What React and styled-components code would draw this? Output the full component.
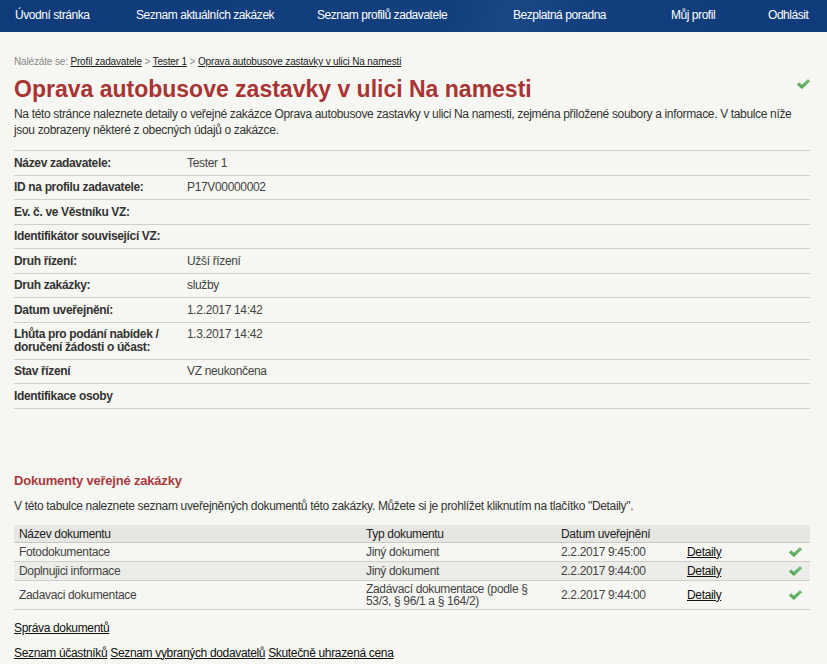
import React from "react";
import styled, { createGlobalStyle } from "styled-components";

const Global = createGlobalStyle`
  html, body { margin: 0; padding: 0; background: #f6f7f2; }
  body {
    font-family: "Liberation Sans", Arial, sans-serif;
    font-size: 12px;
    letter-spacing: -0.34px;
    color: #333;
  }
`;

const Nav = styled.nav`
  height: 32px;
  box-sizing: border-box;
  padding: 0 0 3px 15px;
  background: linear-gradient(100deg, #103b7a 0%, #123f7e 55%, #1a4786 62%, #123f7e 70%, #103b7a 100%);
  display: grid;
  grid-template-columns: 121px 181px 196px 158px 97px auto;
  align-items: center;
`;

const NavItem = styled.a`
  color: #fff;
  font-family: "Liberation Sans", Arial, sans-serif;
  font-size: 12px;
  letter-spacing: -0.45px;
  text-decoration: none;
  white-space: nowrap;
`;

const Content = styled.main`
  padding: 24px 17px 0 14px;
`;

const Crumbs = styled.div`
  font-size: 10px;
  line-height: 12px;
  letter-spacing: -0.15px;
  color: #888;
  a { color: #222; text-decoration: underline; }
`;

const TitleRow = styled.div`
  display: flex;
  justify-content: space-between;
  align-items: flex-start;
  margin-top: 8px;
`;

const Title = styled.h1`
  margin: 0;
  font-size: 23px;
  line-height: 27px;
  letter-spacing: 0;
  font-weight: bold;
  color: #a83434;
`;

const Intro = styled.p`
  margin: 3px 0 0;
  line-height: 16px;
  color: #333;
`;

const DetailTable = styled.div`
  margin-top: 12px;
  border-top: 1px solid #cfcfcb;
`;

const DetailRow = styled.div`
  display: grid;
  grid-template-columns: 173px 1fr;
  border-bottom: 1px solid #cfcfcb;
  padding: 5.5px 0;
  line-height: 12.5px;
`;

const Label = styled.div`
  font-weight: bold;
  color: #333;
`;

const Value = styled.div`
  color: #444;
`;

const Heading = styled.h2`
  margin: 64px 0 0;
  font-size: 13px;
  line-height: 15px;
  letter-spacing: -0.2px;
  font-weight: bold;
  color: #a83a3e;
`;

const Para = styled.p`
  margin: 11px 0 0;
  line-height: 15px;
  color: #333;
`;

const DocTable = styled.table`
  margin-top: 11px;
  width: 100%;
  table-layout: fixed;
  border-collapse: collapse;
  font-size: 12px;
  line-height: 12px;
`;

const Col = styled.col`
  width: ${(p) => p.$w}px;
`;

const Th = styled.th`
  text-align: left;
  font-weight: normal;
  color: #222;
  background: #e6e6e2;
  padding: 3px 0 2px ${(p) => p.$pl || 0}px;
  border-bottom: 1px solid #c8c8c4;
`;

const Tr = styled.tr`
  background: ${(p) => (p.$alt ? "#ecede8" : "transparent")};
  border-bottom: 1px solid #cfcfcb;
`;

const Td = styled.td`
  padding: 2px ${(p) => p.$pr || 0}px 2px ${(p) => p.$pl || 0}px;
  color: #444;
  vertical-align: middle;
`;

const CheckCell = styled.td`
  padding: 1px 7px 1px 0;
  vertical-align: middle;
  line-height: 0;
`;

const CheckBox = styled.div`
  height: 16px;
  display: flex;
  align-items: center;
  justify-content: flex-end;
`;

const Link = styled.a`
  color: #111;
  text-decoration: underline;
`;

const LinkLine = styled.div`
  margin-top: 11px;
  line-height: 14px;
  display: flex;
  gap: 3px;
`;

const CheckSvg = styled.svg`
  display: block;
  width: 15px;
  height: 12px;
`;

const TitleCheck = styled.div`
  padding-top: 2px;
  margin-right: -1px;
`;

function Check() {
  return (
    <CheckSvg viewBox="0 0 16 12">
      <defs>
        <linearGradient id="cg" x1="0" y1="0" x2="0" y2="1">
          <stop offset="0" stopColor="#7cc27a" />
          <stop offset="1" stopColor="#4f9f50" />
        </linearGradient>
      </defs>
      <path d="M0.8 6.6 L3.4 4.2 L6.2 6.9 L12.8 0.6 L15.2 3 L6.2 11.4 Z" fill="url(#cg)" />
    </CheckSvg>
  );
}

const details = [
  ["Název zadavatele:", "Tester 1"],
  ["ID na profilu zadavatele:", "P17V00000002"],
  ["Ev. č. ve Věstníku VZ:", ""],
  ["Identifikátor související VZ:", ""],
  ["Druh řízení:", "Užší řízení"],
  ["Druh zakázky:", "služby"],
  ["Datum uveřejnění:", "1.2.2017 14:42"],
  ["Lhůta pro podání nabídek / doručení žádosti o účast:", "1.3.2017 14:42"],
  ["Stav řízení", "VZ neukončena"],
  ["Identifikace osoby", ""],
];

const docs = [
  ["Fotodokumentace", "Jiný dokument", "2.2.2017 9:45:00"],
  ["Doplnujici informace", "Jiný dokument", "2.2.2017 9:44:00"],
  ["Zadavaci dokumentace", "Zadávací dokumentace (podle § 53/3, § 96/1 a § 164/2)", "2.2.2017 9:44:00"],
];

export default function App() {
  return (
    <>
      <Global />
      <Nav>
        <NavItem href="#">Úvodní stránka</NavItem>
        <NavItem href="#">Seznam aktuálních zakázek</NavItem>
        <NavItem href="#">Seznam profilů zadavatele</NavItem>
        <NavItem href="#">Bezplatná poradna</NavItem>
        <NavItem href="#">Můj profil</NavItem>
        <NavItem href="#">Odhlásit</NavItem>
      </Nav>
      <Content>
        <Crumbs>
          Nalézáte se: <a href="#">Profil zadavatele</a> &gt; <a href="#">Tester 1</a> &gt;{" "}
          <a href="#">Oprava autobusove zastavky v ulici Na namesti</a>
        </Crumbs>
        <TitleRow>
          <Title>Oprava autobusove zastavky v ulici Na namesti</Title>
          <TitleCheck>
            <Check />
          </TitleCheck>
        </TitleRow>
        <Intro>
          Na této stránce naleznete detaily o veřejné zakázce Oprava autobusove zastavky v ulici Na namesti,
          zejména přiložené soubory a informace. V tabulce níže jsou zobrazeny některé z obecných údajů o
          zakázce.
        </Intro>
        <DetailTable>
          {details.map(([l, v]) => (
            <DetailRow key={l}>
              <Label>{l}</Label>
              <Value>{v}</Value>
            </DetailRow>
          ))}
        </DetailTable>
        <Heading>Dokumenty veřejné zakázky</Heading>
        <Para>
          V této tabulce naleznete seznam uveřejněných dokumentů této zakázky. Můžete si je prohlížet kliknutím
          na tlačítko "Detaily".
        </Para>
        <DocTable>
          <colgroup>
            <Col $w={347} />
            <Col $w={195} />
            <Col $w={126} />
            <Col $w={98} />
            <Col $w={30} />
          </colgroup>
          <thead>
            <tr>
              <Th $pl={5}>Název dokumentu</Th>
              <Th $pl={5}>Typ dokumentu</Th>
              <Th $pl={5}>Datum uveřejnění</Th>
              <Th></Th>
              <Th></Th>
            </tr>
          </thead>
          <tbody>
            {docs.map(([n, t, d], i) => (
              <Tr key={n} $alt={i === 1}>
                <Td $pl={5}>{n}</Td>
                <Td $pl={5} $pr={24}>{t}</Td>
                <Td $pl={5}>{d}</Td>
                <Td $pl={5}>
                  <Link href="#">Detaily</Link>
                </Td>
                <CheckCell>
                  <CheckBox>
                    <Check />
                  </CheckBox>
                </CheckCell>
              </Tr>
            ))}
          </tbody>
        </DocTable>
        <LinkLine>
          <Link href="#">Správa dokumentů</Link>
        </LinkLine>
        <LinkLine>
          <Link href="#">Seznam účastníků</Link>
          <Link href="#">Seznam vybraných dodavatelů</Link>
          <Link href="#">Skutečně uhrazená cena</Link>
        </LinkLine>
      </Content>
    </>
  );
}
